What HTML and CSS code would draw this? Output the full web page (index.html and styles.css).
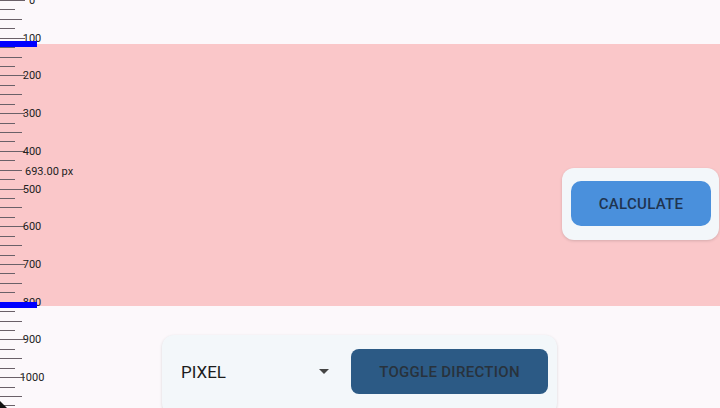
FILE: index.html
```html
<!DOCTYPE html>
<html lang="en">
<head>
  <meta charset="UTF-8" />
  <meta name="viewport" content="width=device-width, initial-scale=1.0" />
  <title>Ruler</title>
  <link rel="stylesheet" href="styles.css">
</head>
<body>
  <div class="stage">
    <div class="selection"></div>
    <div id="ruler" class="ruler"></div>
    <div class="handle handle-top"></div>
    <div class="handle handle-bottom"></div>
    <div class="measure">693.00 px</div>
    <svg class="corner" width="8" height="8" viewBox="0 0 8 8"><polygon points="0,1 7,8 0,8" fill="#111"/></svg>

    <div class="calc-card">
      <button class="btn btn-calc">CALCULATE</button>
    </div>

    <div class="bottom-bar">
      <div class="unit-select">
        <span>PIXEL</span>
        <svg width="10" height="5" viewBox="0 0 10 5"><polygon points="0,0 10,0 5,5" fill="#444"/></svg>
      </div>
      <button class="btn btn-toggle">TOGGLE DIRECTION</button>
    </div>
  </div>

  <script>
    const ruler = document.getElementById("ruler");
    const scale = 0.3772;

    for (let v = 0; v <= 1075; v += 25) {
      const y = Math.round(v * scale);
      const tick = document.createElement("div");
      tick.className = "tick";
      if (v % 100 === 0) tick.classList.add("major");
      else if (v % 50 === 0) tick.classList.add("mid");
      tick.style.top = y + "px";
      ruler.appendChild(tick);

      if (v % 100 === 0) {
        const label = document.createElement("div");
        label.className = "tick-label";
        label.textContent = v;
        label.style.top = y + "px";
        ruler.appendChild(label);
      }
    }
  </script>
</body>
</html>
```

FILE: styles.css
```css
body {
  margin: 0;
  background: #fcf8fb;
  font-family: Roboto, "Liberation Sans", sans-serif;
}
.stage {
  position: relative;
  width: 720px;
  height: 408px;
  overflow: hidden;
}
.selection {
  position: absolute;
  left: 0;
  right: 0;
  top: 44px;
  height: 262px;
  background: #fac7c9;
}
.ruler {
  position: absolute;
  left: 0;
  top: 0;
  width: 60px;
  height: 408px;
}
.tick {
  position: absolute;
  left: 0;
  width: 15px;
  height: 1px;
  background: #6a6068;
}
.tick.mid {
  width: 22px;
}
.tick.major {
  width: 25px;
}
.tick-label {
  position: absolute;
  left: 32px;
  transform: translate(-50%, -50%);
  font-size: 11px;
  color: #222;
  line-height: 1;
}
.handle {
  position: absolute;
  left: 0;
  width: 37px;
  height: 6px;
  background: #0000ff;
}
.handle-top {
  top: 41px;
}
.handle-bottom {
  top: 302px;
}
.measure {
  position: absolute;
  left: 25px;
  top: 165px;
  font-size: 11px;
  color: #222;
}
.corner {
  position: absolute;
  left: 0;
  top: 400px;
}
.btn {
  border: none;
  font-family: Roboto, "Liberation Sans", sans-serif;
  font-size: 15px;
  font-weight: 500;
  letter-spacing: 0.3px;
  cursor: pointer;
}
.calc-card {
  position: absolute;
  right: 1px;
  top: 168px;
  padding: 13px 8px 14px 9px;
  background: #f3f7fa;
  border-radius: 12px;
  box-shadow: 0 1px 3px rgba(0, 0, 0, 0.15);
}
.btn-calc {
  display: block;
  width: 140px;
  height: 45px;
  border-radius: 10px;
  background: #4a90dc;
  color: #1f3450;
}
.bottom-bar {
  position: absolute;
  left: 162px;
  top: 335px;
  width: 395px;
  height: 80px;
  box-sizing: border-box;
  padding: 14px 9px 0 19px;
  display: flex;
  align-items: flex-start;
  gap: 16px;
  background: #f3f7fa;
  border-radius: 12px;
  box-shadow: 0 1px 3px rgba(0, 0, 0, 0.15);
}
.unit-select {
  flex: 1;
  height: 45px;
  display: flex;
  align-items: center;
  justify-content: space-between;
  padding-right: 6px;
  font-size: 17px;
  color: #1c1c1c;
}
.btn-toggle {
  width: 197px;
  height: 45px;
  border-radius: 8px;
  background: #2c5a85;
  color: #28323c;
}
```
